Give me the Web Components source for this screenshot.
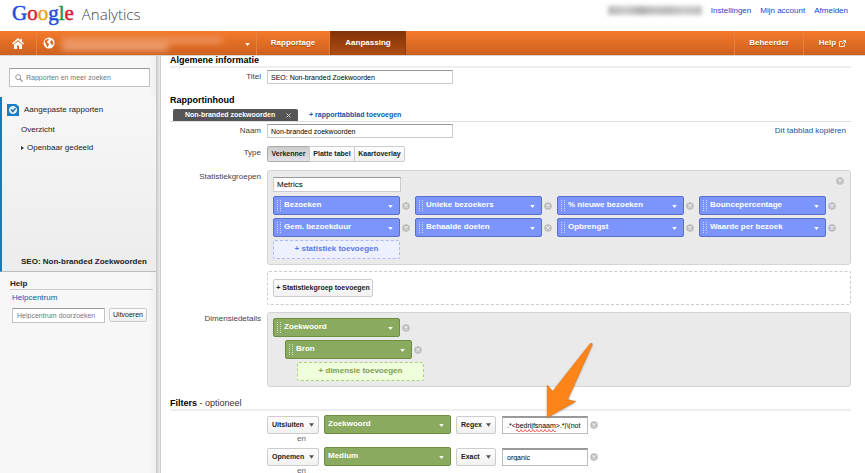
<!DOCTYPE html>
<html lang="nl">
<head>
<meta charset="utf-8">
<meta name="viewport" content="width=device-width, initial-scale=1">
<title>Google Analytics</title>
<style>
html, body { margin: 0; height: 100%; }
body { font: 8px/10px "Liberation Sans", Arial, sans-serif; color: #333; background: #fff; overflow: hidden; }
</style>
</head>
<body>
<analytics-app></analytics-app>
<script>
const BASE = `
  *, *::before, *::after { box-sizing: border-box; }
  :host { display: block; }
  button, input, select { font: inherit; color: inherit; margin: 0; min-width: 0; }
  button, select { cursor: pointer; }
  button { white-space: nowrap; }
  a { text-decoration: none; }
  svg { display: block; flex: none; }
`;
const define = (name, render) => customElements.define(name, class extends HTMLElement {
  constructor() { super(); this.attachShadow({ mode: 'open' }); }
  connectedCallback() {
    if (this.shadowRoot.childNodes.length) return;
    const t = document.createElement('template');
    const [css, html] = render(n => this.getAttribute(n) ?? '');
    t.innerHTML = `<style>${BASE}${css}</style>${html}`;
    this.shadowRoot.append(t.content.cloneNode(true));
  }
});
const caret = (w, h, fill) => `<svg class="caret" width="${w}" height="${h}" viewBox="0 0 6 4" aria-hidden="true"><path d="M0 0h6L3 4z" fill="${fill}"/></svg>`;

/* Top line with the product name and account links */
define('account-header', () => [`
  :host { height: 31px; padding: 0 17px 0 12px; display: flex; justify-content: space-between; }
  .brand { display: flex; align-items: baseline; gap: 8px; line-height: 27px; }
  .google { font-family: "Liberation Serif", serif; font-size: 21px; -webkit-text-stroke: 0.5px; }
  .b { color: #1f4fd8; } .r { color: #d8232f; } .y { color: #eea41c; } .g { color: #1f9a3c; }
  .product { font-family: "Open Sans", sans-serif; font-weight: 300; font-size: 15px; color: #444; }
  nav { display: flex; gap: 9px; padding-top: 6px; }
  a { color: #2342cc; }
  .masked { width: 94px; height: 9px; filter: blur(2px);
    background: linear-gradient(90deg, #bbb, #ccc 20%, #b0b0b0 35%, #c4c4c4 50%, #bbb 65%, #ccc 80%, #c0c0c0); }
`, `
  <div class="brand"><span class="google"><span class="b">G</span><span class="r">o</span><span class="y">o</span><span class="b">g</span><span class="g">l</span><span class="r">e</span></span><span class="product">Analytics</span></div>
  <nav><span class="masked"></span><a href="#settings">Instellingen</a><a href="#account">Mijn account</a><a href="#signout">Afmelden</a></nav>
`]);

/* Orange navigation bar */
define('main-nav', () => [`
  :host { height: 25px; display: flex; background: linear-gradient(#f47a2b, #cd611f); border-bottom: 1px solid #d9d2cd; color: #fff; font-weight: bold; }
  a, button { display: flex; align-items: center; justify-content: center; color: #fff; border: 0; background: none; padding: 0; border-right: 1px solid #e8813f; text-shadow: 0 1px 1px #9c4715; }
  .home { width: 37px; }
  .profile { width: 220px; justify-content: flex-start; padding: 0 6px; gap: 7px; }
  .masked { width: 160px; height: 13px; filter: blur(3px); display: grid; gap: 1px; }
  .masked i { background: #ee9460; } .masked i + i { width: 66%; background: #efa67c; }
  .profile .caret { margin: 3px 0 0 auto; }
  .tab { width: 73px; }
  .active { width: 76px; background: linear-gradient(#803207, #b04d14); border: 1px solid #8e3d0c; border-width: 0 1px; }
  .admin { width: 70px; margin-left: auto; border-left: 1px solid #e8813f; }
  .help { width: 61px; gap: 3px; border: 0; padding-right: 4px; }
`, `
  <a class="home" href="#home" aria-label="Home"><svg width="12" height="11" viewBox="0 0 12 11"><path fill="#fff" d="M6 0 0 5.500l1 1 5-4.400 5 4.400 1-1-2-1.900V.7H8.500v1.500zM2 6.600V11h3V7.500h2V11h3V6.600L6 3.200z"/></svg></a>
  <button class="profile" aria-label="Profiel"><svg width="12" height="12" viewBox="0 0 12 12"><circle cx="6" cy="6" r="5.500" fill="#fff"/><path fill="#dc6b25" d="M1.400 4.200 3 2.600 5.200 1.900l.8 1.200-1.500.9-.7 1.200 1.500 1 .8 1.300-1.100 1.600-.5 1.400-1.300-2.200L2.500 6.200zM7.500 2l2.300 2.200.5 2.600-1.300 1.900-.7-1.900-1.300-.8.3-1.700L8.400 4z"/></svg><span class="masked"><i></i><i></i></span>${caret(5,3,'#fff')}</button>
  <a class="tab" href="#reports">Rapportage</a>
  <a class="tab active" href="#customization" aria-current="page">Aanpassing</a>
  <a class="admin" href="#admin">Beheerder</a>
  <a class="help" href="#help">Help <svg width="7" height="7" viewBox="0 0 7 7" fill="none" stroke="#fff"><path d="M3.500 1.500h-3v5h5v-3" stroke-width=".8"/><path d="M3 4 6 1M4 .5h2.500V3" stroke-width=".9"/></svg></a>
`]);

/* Left column: report tree and help box */
define('report-sidebar', () => [`
  :host { width: 161px; flex: none; background: linear-gradient(90deg, #f7f7f7 148px, #f0f0f0 156px, #c4c4c4 156px, #dadada 158px, #ececec 160px, #ccc 160px); }
  .search { padding: 12px 0 10px 9px; }
  .box { display: flex; align-items: center; gap: 3px; width: 141px; height: 19px; padding: 0 5px; background: #fff; border: 1px solid #c0c0c0; border-top-color: #999; }
  .box input { border: 0; padding: 0; outline: 0; flex: 1; background: none; font-size: 7px; }
  input::placeholder { color: #777; opacity: 1; }
  .tree { width: 156px; height: 175px; display: flex; flex-direction: column; border-left: 2px solid #127cc1; background: linear-gradient(#f7f7f7, #ececec); border-bottom: 1px solid #bbb; padding: 6px 0 4px; color: #222; }
  .tree a { color: inherit; display: flex; align-items: center; }
  .root { gap: 5px; padding-left: 5px; height: 13px; margin-bottom: 9px; }
  .item { padding-left: 19px; height: 10px; margin-bottom: 8px; gap: 3px; }
  .current { margin: auto 0 0; font-weight: bold; }
  .help { padding: 7px 0 0 10px; width: 153px; }
  h2 { font-size: 8px; line-height: 10px; margin: 0 0 3px; color: #222; border-bottom: 1px solid #ccc; }
  .help a { color: #1155a5; margin-left: 2px; }
  form { display: flex; gap: 4px; margin: 5px 0 0 2px; }
  form input { width: 93px; height: 15px; padding: 0 4px; border: 1px solid #c4c4c4; border-top-color: #999; background: #fff; font-size: 7px; }
  form button { width: 38px; height: 14px; padding: 0; border: 1px solid #ccc; border-radius: 2px; background: linear-gradient(#fdfdfd, #f0f0f0); font-size: 7px; color: #222; }
`, `
  <div class="search"><label class="box"><svg width="8" height="8" viewBox="0 0 8 8" fill="none" stroke="#999"><circle cx="3.200" cy="3.200" r="2.500"/><path d="m5 5 2.600 2.600" stroke-width="1.300"/></svg><input type="text" placeholder="Rapporten en meer zoeken" aria-label="Rapporten en meer zoeken"></label></div>
  <nav class="tree">
    <a class="root" href="#custom"><svg width="12" height="12" viewBox="0 0 12 12"><path fill="#1b7ec4" d="M0 0h9l3 2.500V12H0z"/><circle cx="6" cy="6" r="3.600" fill="#dceefa" stroke="#fff" stroke-width=".8"/><path d="m4 5.500 1.800 2 2.800-3.300" fill="none" stroke="#125c98" stroke-width="1.300"/></svg>Aangepaste rapporten</a>
    <a class="item" href="#overview">Overzicht</a>
    <a class="item" href="#shared"><svg width="3" height="4" viewBox="0 0 3 4"><path d="m0 0 3 2-3 2z" fill="#333"/></svg>Openbaar gedeeld</a>
    <a class="item current" href="#seo">SEO: Non-branded Zoekwoorden</a>
  </nav>
  <section class="help"><h2>Help</h2><a href="#helpcenter">Helpcentrum</a>
    <form><input type="text" placeholder="Helpcentrum doorzoeken" aria-label="Helpcentrum doorzoeken"><button type="button">Uitvoeren</button></form>
  </section>
`]);

define('section-title', a => [`
  h2 { margin: 0; font-size: 9px; line-height: 11px; color: #000; }
  span { font-weight: normal; color: #333; }
  :host([ruled]) { border-bottom: 2px solid #eee; }
`, `<h2><slot></slot>${a('note') ? ` <span>- ${a('note')}</span>` : ''}</h2>`]);

/* Label column plus content column */
define('form-row', a => [`
  :host { display: grid; grid-template-columns: 91px minmax(0, 1fr); column-gap: 6px; }
  .label { text-align: right; color: #444; padding-top: 2px; }
`, `<span class="label">${a('label')}</span><div role="group" aria-label="${a('label')}"><slot></slot></div>`]);

define('text-field', a => [`
  :host { display: grid; grid-template-columns: 91px minmax(0, 1fr) auto; column-gap: 6px; }
  label { text-align: right; color: #444; padding-top: 2px; }
  input { display: block; width: 186px; height: 14px; padding: 0 3px; border: 1px solid #ccc; border-top-color: #999; background: #fff; font-size: 7px; color: #000; }
`, `<label for="f">${a('label')}</label><div><input id="f" type="text" value="${a('value')}"></div><slot></slot>`]);

define('remove-button', a => [`
  :host { width: 8px; flex: none; }
  button { border: 0; padding: 0; background: none; display: block; }
`, `<button type="button" aria-label="${a('label') || 'Verwijderen'}"><svg width="8" height="8" viewBox="0 0 8 8"><circle cx="4" cy="4" r="3.800" fill="#bdbdbd"/><path d="m2.400 2.400 3.200 3.200m0-3.200L2.400 5.600" stroke="#f2f2f2" stroke-width="1.100"/></svg></button>`]);

/* Coloured picker for a statistic or a dimension */
define('field-chip', a => [`
  :host { --fill: #7b95fd; --edge: #5a6fca; display: flex; align-items: center; gap: 2px; }
  :host([kind="dimension"]) { --fill: #8aab5f; --edge: #6d8f42; }
  .chip { width: 127px; height: 19px; display: grid; align-items: center; color: #fff; }
  .chip > * { grid-area: 1 / 1; }
  select { appearance: none; width: 100%; height: 19px; border: 1px solid var(--edge); border-radius: 2px; background: var(--fill); color: #fff; font-weight: bold; padding: 0 18px 1px 10px; }
  :host([plain]) select { padding-left: 3px; }
  :host([plain]) .grip { display: none; }
  .grip { margin-left: 4px; pointer-events: none; }
  .caret { justify-self: end; margin: 1px 7px 0 0; pointer-events: none; }
`, `<span class="chip"><select aria-label="Veld"><option>${a('value')}</option></select>
  <svg class="grip" width="4" height="11" viewBox="0 0 4 11"><path d="M.5 0v11M3.500 0v11" stroke="#fff" stroke-opacity=".65" stroke-dasharray="1 1"/></svg>${caret(5,3,'#fff')}</span>
  ${a('plain') ? '' : `<remove-button label="${a('value')} verwijderen"></remove-button>`}`]);

define('add-chip', () => [`
  button { width: 127px; height: 19px; display: block; padding: 0 0 1px; border: 1px dashed #a9b9fb; border-radius: 2px; background: #edf1ff; color: #5d78e6; font-weight: bold; }
  :host([kind="dimension"]) button { border-color: #a8cf7c; background: #efffdc; color: #7da04e; }
`, `<button type="button"><slot></slot></button>`]);

define('drop-down', a => [`
  .box { display: grid; align-items: center; width: 100%; }
  .box > * { grid-area: 1 / 1; }
  select { appearance: none; width: 100%; height: 18px; padding: 0 10px 0 4px; border: 1px solid #ccc; border-radius: 2px; background: linear-gradient(#fdfdfd, #f1f1f1); color: #222; font-size: 7px; font-weight: bold; }
  .caret { justify-self: end; margin-right: 5px; pointer-events: none; }
`, `<span class="box"><select aria-label="${a('label')}"><option>${a('value')}</option></select>${caret(5,4,'#555')}</span>`]);

/* Filter condition value, with optional spelling mark and pointer arrow */
define('filter-value', a => [`
  :host { position: relative; display: grid; width: 86px; }
  input, .spell { grid-area: 1 / 1; }
  input { width: 100%; height: 18px; padding: 1px 4px 0; border: 1px solid #bbb; border-top: 2px solid #999; background: #fff; font-size: 7px; color: #000; }
  .spell { margin: 13px 0 0 14px; pointer-events: none; }
  .arrow { position: absolute; left: 44px; bottom: 16px; pointer-events: none; filter: drop-shadow(0 1px 1px #8888); }
`, `<input type="text" aria-label="Waarde" value="${a('value')}">${a('marked') ? `
  <svg class="spell" width="40" height="3" viewBox="0 0 40 3" fill="none" stroke="#e33" stroke-width=".8"><path d="M0 2 ${Array.from({ length: 20 }, (_, i) => `l1 ${i % 2 ? 1.5 : -1.5}l1 ${i % 2 ? -1.5 : 1.5}`).join('')}"/></svg>
  <svg class="arrow" width="48" height="76" viewBox="0 0 48 76"><path fill="#fd8418" stroke="#dd741c" stroke-width=".6" stroke-linejoin="round" d="M1.300 75.500V43l5.400 6.200L44.300 1.600q2.400-1.200 2 1.100L21.700 57.500l8 2z"/></svg>` : ''}`]);

define('filter-row', a => [`
  :host { display: flex; align-items: center; gap: 5px; padding-left: 97px; }
  .mode { width: 52px; } .match { width: 40px; } filter-value { margin-left: 1px; }
  remove-button { margin-left: -3px; }
`, `<drop-down class="mode" label="Modus" value="${a('mode')}"></drop-down>
  <field-chip kind="dimension" plain="1" value="${a('field')}"></field-chip>
  <drop-down class="match" label="Overeenkomst" value="${a('match')}"></drop-down>
  <filter-value value="${a('value')}" ${a('marked') ? 'marked="1"' : ''}></filter-value><remove-button></remove-button>`]);

define('report-form', () => {
  const chips = ['Bezoeken', 'Unieke bezoekers', '% nieuwe bezoeken', 'Bouncepercentage', 'Gem. bezoekduur', 'Behaalde doelen', 'Opbrengst', 'Waarde per bezoek'];
  return [`
  :host { flex: 1; min-width: 0; padding: 0 14px 0 9px; background: #fff; }
  text-field { margin-top: 2px; }
  section-title { margin-top: 11px; }
  section-title:first-of-type { margin-top: -1px; }
  .tabs { display: flex; align-items: center; gap: 11px; margin-top: 3px; padding-left: 3px; border-bottom: 1px solid #ddd; font-size: 7px; font-weight: bold; }
  .tab { width: 125px; height: 12px; display: flex; align-items: center; justify-content: space-between; padding: 0 7px 0 12px; background: #555; border-radius: 2px 2px 0 0; color: #fff; }
  .tab button { border: 0; padding: 0; background: none; }
  .add { border: 0; padding: 0; background: none; font-weight: bold; color: #1155a5; }
  .copy { color: #1155a5; padding: 2px 5px 0 0; }
  form-row { margin-top: 8px; }
  .group { display: flex; }
  .group button, .plain { height: 16px; padding: 0; border: 1px solid #ccc; background: linear-gradient(#fdfdfd, #f1f1f1); color: #222; font-size: 7px; font-weight: bold; }
  .group button + button { margin-left: -1px; }
  .group button:first-child { width: 43px; background: linear-gradient(#ccc, #e2e2e2); border-color: #aaa; border-radius: 2px 0 0 2px; }
  .group button:nth-child(2) { width: 46px; } .group button:last-child { width: 51px; border-radius: 0 2px 2px 0; }
  .panel { background: #eaeaea; border: 1px solid #d4d4d4; border-radius: 3px; padding: 6px 5px 5px; }
  .top { display: flex; justify-content: space-between; }
  .top input { width: 128px; height: 15px; padding: 0 3px; border: 1px solid #ccc; border-top-color: #999; background: #fff; color: #000; font-size: 8px; }
  .top remove-button { margin-right: 1px; }
  .chips { display: flex; flex-wrap: wrap; gap: 3px 5px; margin: 4px 0 3px; }
  .dashed { border: 1px dashed #ccc; border-radius: 2px; padding: 7px 5px; margin-top: 6px; }
  .plain { width: 100px; height: 18px; border-radius: 2px; display: block; }
  .last { margin-top: 7px; }
  .nest { display: grid; gap: 3px; padding-top: 5px; }
  .nest :nth-child(2) { margin-left: 12px; } .nest :nth-child(3) { margin-left: 24px; }
  filter-row { margin-top: 4px; }
  .and { padding-left: 127px; color: #666; height: 10px; }
  .and + filter-row { margin-top: 3px; }
  `, `
  <section-title ruled>Algemene informatie</section-title>
  <text-field label="Titel" value="SEO: Non-branded Zoekwoorden"></text-field>
  <section-title>Rapportinhoud</section-title>
  <div class="tabs"><span class="tab">Non-branded zoekwoorden <button type="button" aria-label="Tabblad sluiten"><svg width="5" height="5" viewBox="0 0 5 5"><path d="m.5.5 4 4m0-4-4 4" stroke="#ccc"/></svg></button></span><button type="button" class="add">+ rapporttabblad toevoegen</button></div>
  <text-field label="Naam" value="Non-branded zoekwoorden"><a class="copy" href="#copy">Dit tabblad kopiëren</a></text-field>
  <form-row label="Type"><div class="group"><button type="button" aria-pressed="true">Verkenner</button><button type="button">Platte tabel</button><button type="button">Kaartoverlay</button></div></form-row>
  <form-row label="Statistiekgroepen">
    <div class="panel"><div class="top"><input type="text" value="Metrics" aria-label="Naam van groep"><remove-button label="Groep verwijderen"></remove-button></div>
      <div class="chips">${chips.map(c => `<field-chip value="${c}"></field-chip>`).join('')}</div>
      <add-chip>+ statistiek toevoegen</add-chip></div>
    <div class="dashed"><button type="button" class="plain">+ Statistiekgroep toevoegen</button></div>
  </form-row>
  <form-row class="last" label="Dimensiedetails">
    <div class="panel nest"><field-chip kind="dimension" value="Zoekwoord"></field-chip><field-chip kind="dimension" value="Bron"></field-chip><add-chip kind="dimension">+ dimensie toevoegen</add-chip></div>
  </form-row>
  <section-title ruled note="optioneel">Filters</section-title>
  <filter-row mode="Uitsluiten" field="Zoekwoord" match="Regex" value=".*&amp;lt;bedrijfsnaam&amp;gt;.*|\\(not" marked="1"></filter-row>
  <div class="and">en</div>
  <filter-row mode="Opnemen" field="Medium" match="Exact" value="organic"></filter-row>
  <div class="and">en</div>
`]; });

define('analytics-app', () => [`
  :host { display: flex; flex-direction: column; height: 100vh; overflow: hidden; }
  main { display: flex; flex: 1; min-height: 0; }
`, `<account-header></account-header><main-nav></main-nav><main><report-sidebar></report-sidebar><report-form></report-form></main>`]);
</script>
</body>
</html>
